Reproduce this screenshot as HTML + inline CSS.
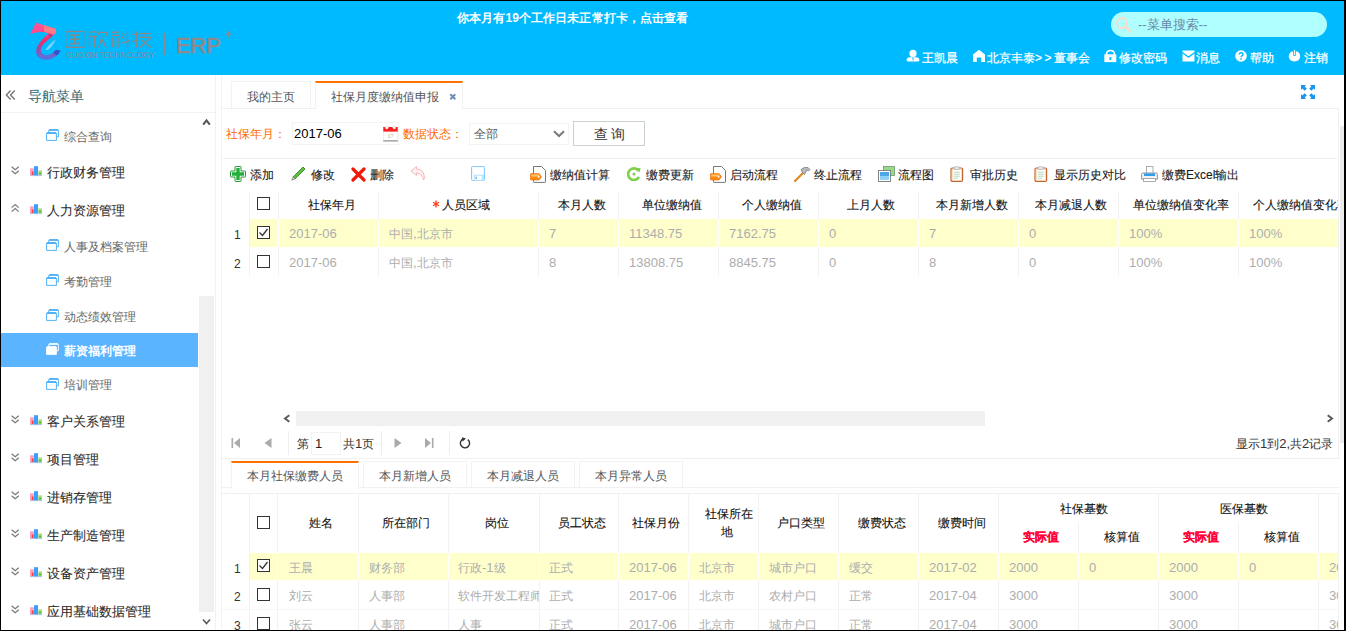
<!DOCTYPE html>
<html><head><meta charset="utf-8">
<style>
html,body{margin:0;padding:0}
body{width:1346px;height:631px;overflow:hidden;position:relative;background:#fff;font-family:"Liberation Sans",sans-serif;font-size:12px;color:#333}
.a{position:absolute}
.t{position:absolute;white-space:nowrap;line-height:16px;margin-left:1px}
.bd{position:absolute;background:#000}
#hdr{position:absolute;left:0;top:0;width:1346px;height:75px;background:#00baff}
.nav{color:#fff;font-size:12px;-webkit-text-stroke:0.25px #fff}
.sb1{font-size:13px;color:#2a2a2a;-webkit-text-stroke-width:0.08px}
.sb2{font-size:12px;color:#666}
.hl{background:#eee}
.vl{position:absolute;width:1px;background:#eee}
.hz{position:absolute;height:1px;background:#eee}
.th{font-size:12px;color:#111;-webkit-text-stroke-width:0.1px}
.td{font-size:12px;color:#adadad}
.num{font-size:13px}
.tb{font-size:12px;color:#1a1a1a;-webkit-text-stroke-width:0.1px}
.yel{position:absolute;background:#ffffcc}
.ck{position:absolute;width:11px;height:11px;border:1px solid #333;background:#fff}
.rn{font-size:12px;color:#333}
</style></head><body>

<div id="hdr"></div>
<!-- header notice -->
<div class="t" style="left:456px;top:10px;letter-spacing:0.1px;color:#fff;font-weight:bold;font-size:12px">你本月有19个工作日未正常打卡，点击查看</div>
<!-- search -->
<div class="a" style="left:1111px;top:12px;width:216px;height:25px;border-radius:13px;background:#b0ffff"></div>
<div class="t" style="left:1137px;top:17px;font-size:13px;color:#6a8aa8">--菜单搜索--</div>
<!-- nav links -->
<div class="t nav" style="left:921px;top:50px">王凯晨</div>
<div class="t nav" style="left:986px;top:50px">北京丰泰<span style="letter-spacing:2.5px">&gt;&gt;</span>董事会</div>
<div class="t nav" style="left:1118px;top:50px">修改密码</div>
<div class="t nav" style="left:1195px;top:50px">消息</div>
<div class="t nav" style="left:1249px;top:50px">帮助</div>
<div class="t nav" style="left:1303px;top:50px">注销</div>

<!-- sidebar -->

<div class="t" style="left:27px;top:87.5px;font-size:14px;color:#356a75">导航菜单</div>
<div class="hz" style="left:1px;top:112px;width:214px;background:#f3f3f3"></div>
<div class="vl" style="left:215px;top:75px;height:556px;background:#f2f2f2"></div>
<div class="vl" style="left:221px;top:75px;height:556px;background:#f3f3f3"></div>

<div class="t sb2" style="left:63px;top:129px">综合查询</div>
<div class="t sb1" style="left:46px;top:165.0px">行政财务管理</div>
<div class="t sb1" style="left:46px;top:203.0px">人力资源管理</div>
<div class="t sb2" style="left:63px;top:238.5px">人事及档案管理</div>
<div class="t sb2" style="left:63px;top:273.5px">考勤管理</div>
<div class="t sb2" style="left:63px;top:308.5px">动态绩效管理</div>
<div class="a" style="left:1px;top:333px;width:197px;height:34px;background:#5ab4ff"></div>
<div class="t sb2" style="left:63px;top:342.5px;color:#fff;font-weight:bold">薪资福利管理</div>
<div class="t sb2" style="left:63px;top:377px">培训管理</div>
<div class="t sb1" style="left:46px;top:414.0px">客户关系管理</div>
<div class="t sb1" style="left:46px;top:452.0px">项目管理</div>
<div class="t sb1" style="left:46px;top:490.0px">进销存管理</div>
<div class="t sb1" style="left:46px;top:528.0px">生产制造管理</div>
<div class="t sb1" style="left:46px;top:566.0px">设备资产管理</div>
<div class="t sb1" style="left:46px;top:604.0px">应用基础数据管理</div>
<div class="a" style="left:199px;top:296px;width:15px;height:316px;background:#f0f0f0"></div>

<!-- tabs -->
<div class="a" style="left:231px;top:81px;width:78px;height:27px;border:1px solid #f2f2f2;border-bottom:none"></div>
<div class="t" style="left:246px;top:88.5px;color:#555">我的主页</div>
<div class="a" style="left:315px;top:81px;width:146px;height:26px;border:1px solid #f2f2f2;border-top:2px solid #ff7200;border-bottom:none;background:#fff"></div>
<div class="t" style="left:330px;top:88.5px;color:#555">社保月度缴纳值申报</div>
<svg class="a" style="left:448.5px;top:92.5px" width="8" height="8" viewBox="0 0 8 8"><path d="M1.3 1.3 L6.3 6.3 M6.3 1.3 L1.3 6.3" stroke="#6f8db5" stroke-width="2"/></svg>

<!-- panel -->
<div class="a" style="left:221px;top:108px;width:94px;height:1px;background:#f0f0f0"></div>
<div class="a" style="left:462px;top:108px;width:877px;height:1px;background:#f0f0f0"></div>
<div class="a" style="left:221px;top:458px;width:1118px;height:1px;background:#f0f0f0"></div>
<div class="a" style="left:1338px;top:108px;width:1px;height:351px;background:#f0f0f0"></div>
<div class="a" style="left:1340px;top:126px;width:4px;height:317px;background:#eaeaea"></div>

<!-- form -->
<div class="t" style="left:225px;top:126px;color:#ff6a00">社保年月：</div>
<div class="a" style="left:292px;top:122px;width:105px;height:21px;border:1px solid #f3f3f3"></div>
<div class="t" style="left:293px;top:126px;color:#000;font-size:13px">2017-06</div>
<div class="t" style="left:402px;top:126px;color:#ff6a00">数据状态：</div>
<div class="a" style="left:469px;top:123px;width:98px;height:20px;border:1px solid #f3f3f3"></div>
<div class="t" style="left:473px;top:126px;color:#555">全部</div>
<div class="a" style="left:573px;top:121px;width:70px;height:23px;border:1px solid #c9d3c9"></div>
<div class="t" style="left:593px;top:126px;color:#333;font-size:14px;word-spacing:-0.5px">查 询</div>
<div class="hz" style="left:223px;top:158px;width:1114px"></div>

<!-- toolbar -->
<div class="t tb" style="left:249px;top:167px">添加</div>
<div class="t tb" style="left:310px;top:167px">修改</div>
<div class="t tb" style="left:369px;top:167px">删除</div>
<div class="t tb" style="left:549px;top:167px">缴纳值计算</div>
<div class="t tb" style="left:645px;top:167px">缴费更新</div>
<div class="t tb" style="left:729px;top:167px">启动流程</div>
<div class="t tb" style="left:813px;top:167px">终止流程</div>
<div class="t tb" style="left:897px;top:167px">流程图</div>
<div class="t tb" style="left:969px;top:167px">审批历史</div>
<div class="t tb" style="left:1053px;top:167px">显示历史对比</div>
<div class="t tb" style="left:1161px;top:167px">缴费Excel输出</div>


<!-- LOGO -->
<svg class="a" style="left:26px;top:20px" width="38" height="42" viewBox="0 0 38 42">
  <defs>
    <linearGradient id="lg2" x1="0" y1="0" x2="0" y2="42" gradientUnits="userSpaceOnUse"><stop offset="0" stop-color="#ff5aa0"/><stop offset="0.3" stop-color="#ff4a8c"/><stop offset="0.5" stop-color="#f42a6a"/><stop offset="0.72" stop-color="#9050b0"/><stop offset="0.9" stop-color="#5a72dc"/><stop offset="1" stop-color="#5a68d0"/></linearGradient>
  </defs>
  <path d="M4 14.3 L10 2.7 Q19 5.5 28.5 8.5 Q31 10 29.8 13 Q24 18 18.5 23 Q14.5 27 14.8 31 Q15.5 35 21 35.3 Q26 35 30 30 L34.5 30.5 Q31.5 37.5 23 39.5 Q14 40.5 11 35.5 Q8.5 30.5 12.5 24.5 Q16.5 18.5 22.5 13.3 Q14 10.5 4 14.3 Z" fill="url(#lg2)"/>
  <path d="M18 5 Q24 7 28.5 8.5 Q31 10 29.8 13 L27.5 15 Q25 13 22.5 13.3 L18 11.8 Z" fill="#ff7a82"/>
  <path d="M22.5 13.3 L27.5 15 Q25 17 23 18.5 Z" fill="#a03a80" opacity="0.7"/>
  <path d="M27 32.5 Q29.5 30 30 30 L34.5 30.5 Q33 34 30.5 35.5 Z" fill="#3a52c8"/>
  <path d="M19.5 30 Q22 25 29.5 19.5 Q28 25 22 30 Z" fill="#b0e0ff" opacity="0.7"/>
</svg>
<svg class="a" style="left:63px;top:28px" width="92" height="22" viewBox="0 0 92 22" fill="none" stroke="#8c8586" stroke-width="1.35" stroke-linecap="butt">
<rect x="2.7" y="3.5" width="18" height="15.8"/>
<path d="M6.3 7 H17.1 M6.3 11.2 H17.1 M6.3 15.9 H17.1 M11.7 7 V15.9 M15.6 13.6 L16.6 14.8"/>
<path d="M26.5 3.3 V19.6 M26.5 3.9 H33.8 M26.5 8.5 H33.8 M31.4 8.5 V19.6"/>
<path d="M35.3 6.8 L36.6 3.3 M36.4 4.4 H43.3 V7.8 M39.2 8.2 L35.6 19.6 M39 11.5 L43.3 19.6"/>
<g transform="translate(45 0)">
<path d="M3.3 4.4 L11.5 3.8 M3.3 7.3 H11.5 M7.5 3.8 V19.6 M4.2 9.4 V19.6 M11 9.4 V19.6"/>
<path d="M14.6 4.9 L16.4 7.5 M13.8 8.4 L16 11.5 M13.6 15.3 L21.6 12.6 M19.5 3.3 V19.6"/>
<path d="M28.3 3.3 V19.6 M24.4 6.5 H30.3 M24.4 13.3 L30.3 12.3"/>
<path d="M31.7 5.6 H43.6 M37.3 3.3 V9.4 M31.7 9.4 H42.8 L31.7 19.6 M33.5 11.9 L42.9 19.6"/>
</g>
</svg>
<div class="t" style="left:65px;top:50px;font-size:8.5px;line-height:10px;color:#8d8a8c;letter-spacing:0px;transform:scaleX(0.93);transform-origin:left">GUOXIN TECHNOLOGY</div>
<div class="a" style="left:163px;top:33px;width:2px;height:22px;background:#8d8a8c"></div>
<div class="t" style="left:175px;top:34.5px;font-size:22px;line-height:22px;color:#8d8a8c;-webkit-text-stroke:0.7px #8d8a8c;letter-spacing:-0.2px">ERP</div>
<svg class="a" style="left:225px;top:31px" width="8" height="7" viewBox="0 0 8 7"><path d="M0.3 3.2 H7.3 M3.8 0 V6.6" stroke="#8d8a8c" stroke-width="1.3"/></svg>

<!-- search icon -->
<svg class="a" style="left:1115px;top:16px" width="18" height="18" viewBox="0 0 18 18"><circle cx="7" cy="7" r="5" fill="none" stroke="#ffd8c8" stroke-width="1.8"/><path d="M10.5 10.5 L15.5 15.5" stroke="#ffd8c8" stroke-width="2.2" stroke-linecap="round"/></svg>

<!-- header nav icons -->
<svg class="a" style="left:906px;top:49px" width="14" height="14" viewBox="0 0 14 14"><circle cx="7" cy="4.4" r="3.6" fill="#fff"/><path d="M0.6 11 Q0.6 8.4 4 8.2 L10 8.2 Q13.4 8.4 13.4 11 Q13.4 12.6 11.6 12.6 L2.4 12.6 Q0.6 12.6 0.6 11 Z" fill="#fff"/><path d="M6.4 8.6 L7.6 8.6 L7.4 11.3 L7 11.8 L6.6 11.3 Z" fill="#00baff"/></svg>
<svg class="a" style="left:972px;top:49px" width="14" height="14" viewBox="0 0 14 14"><path d="M7 0.8 L13 5.6 L13 13 L9.2 13 L9.2 8.6 L4.8 8.6 L4.8 13 L1 13 L1 5.6 Z" fill="#fff"/></svg>
<svg class="a" style="left:1104px;top:49px" width="13" height="14" viewBox="0 0 13 14"><path d="M2.4 6 Q2.4 1.4 6.5 1.4 Q10.6 1.4 10.6 6" fill="none" stroke="#fff" stroke-width="1.5"/><rect x="0.3" y="5.3" width="12" height="7.8" fill="#fff"/><rect x="5.5" y="8" width="1.8" height="3" fill="#00baff"/></svg>
<svg class="a" style="left:1182px;top:50px" width="13" height="12" viewBox="0 0 13 12"><path d="M0.5 0.5 L12.5 0.5 L12.5 2 L6.5 6.3 L0.5 2 Z" fill="#fff"/><path d="M0.5 3.6 L6.5 7.9 L12.5 3.6 L12.5 11.5 L0.5 11.5 Z" fill="#fff"/></svg>
<svg class="a" style="left:1235px;top:50px" width="12" height="12" viewBox="0 0 12 12"><circle cx="6" cy="6" r="5.8" fill="#fff"/><path d="M4.2 4.6 Q4.2 2.7 6 2.7 Q7.9 2.7 7.9 4.4 Q7.9 5.4 6.9 5.9 Q6.1 6.3 6.1 7.2" fill="none" stroke="#00baff" stroke-width="1.4"/><rect x="5.3" y="8.2" width="1.5" height="1.5" fill="#00baff"/></svg>
<svg class="a" style="left:1288px;top:49px" width="13" height="13" viewBox="0 0 13 13"><path d="M4 2.6 Q0.8 4.1 0.8 7.3 Q0.8 12.4 6.5 12.4 Q12.2 12.4 12.2 7.3 Q12.2 4.1 9 2.6" fill="#fff"/><rect x="5.6" y="0.3" width="1.8" height="6.2" fill="#fff" stroke="#00baff" stroke-width="0.8"/></svg>

<!-- sidebar icons -->
<svg class="a" style="left:5px;top:89px" width="12" height="12" viewBox="0 0 12 12"><path d="M5.6 1.6 L1.4 6 L5.6 10.4 M9.8 1.6 L5.6 6 L9.8 10.4" fill="none" stroke="#7a7a7a" stroke-width="1.5"/></svg>
<svg class="a" style="left:202px;top:118px" width="9" height="8" viewBox="0 0 9 8"><path d="M1.2 6.6 L4.5 2.4 L7.8 6.6" fill="none" stroke="#555" stroke-width="2.1"/></svg>
<svg class="a" style="left:202px;top:618px" width="9" height="7" viewBox="0 0 9 7"><path d="M1 1.5 L4.5 5.5 L8 1.5" fill="none" stroke="#555" stroke-width="1.5"/></svg>

<svg class="a" style="left:46px;top:128.5px" width="13" height="12" viewBox="0 0 13 12"><path d="M2.7 3.5 L2.7 1.8 Q2.7 0.6 3.9 0.6 L11.3 0.6 Q12.4 0.6 12.4 1.8 L12.4 7.8 L10.5 7.8" fill="none" stroke="#3fa9f5" stroke-width="0.9"/><path d="M0.6 4.8 Q0.6 3.6 1.8 3.6 L9.2 3.6 Q10.4 3.6 10.4 4.8 L10.4 11.4 L0.6 11.4 Z" fill="none" stroke="#3fa9f5" stroke-width="0.9"/><rect x="0.6" y="3.6" width="9.8" height="1.3" fill="#3fa9f5"/><rect x="3" y="0.6" width="9.2" height="1.2" fill="#3fa9f5"/></svg>
<svg class="a" style="left:46px;top:238.5px" width="13" height="12" viewBox="0 0 13 12"><path d="M2.7 3.5 L2.7 1.8 Q2.7 0.6 3.9 0.6 L11.3 0.6 Q12.4 0.6 12.4 1.8 L12.4 7.8 L10.5 7.8" fill="none" stroke="#3fa9f5" stroke-width="0.9"/><path d="M0.6 4.8 Q0.6 3.6 1.8 3.6 L9.2 3.6 Q10.4 3.6 10.4 4.8 L10.4 11.4 L0.6 11.4 Z" fill="none" stroke="#3fa9f5" stroke-width="0.9"/><rect x="0.6" y="3.6" width="9.8" height="1.3" fill="#3fa9f5"/><rect x="3" y="0.6" width="9.2" height="1.2" fill="#3fa9f5"/></svg>
<svg class="a" style="left:46px;top:273.5px" width="13" height="12" viewBox="0 0 13 12"><path d="M2.7 3.5 L2.7 1.8 Q2.7 0.6 3.9 0.6 L11.3 0.6 Q12.4 0.6 12.4 1.8 L12.4 7.8 L10.5 7.8" fill="none" stroke="#3fa9f5" stroke-width="0.9"/><path d="M0.6 4.8 Q0.6 3.6 1.8 3.6 L9.2 3.6 Q10.4 3.6 10.4 4.8 L10.4 11.4 L0.6 11.4 Z" fill="none" stroke="#3fa9f5" stroke-width="0.9"/><rect x="0.6" y="3.6" width="9.8" height="1.3" fill="#3fa9f5"/><rect x="3" y="0.6" width="9.2" height="1.2" fill="#3fa9f5"/></svg>
<svg class="a" style="left:46px;top:308.5px" width="13" height="12" viewBox="0 0 13 12"><path d="M2.7 3.5 L2.7 1.8 Q2.7 0.6 3.9 0.6 L11.3 0.6 Q12.4 0.6 12.4 1.8 L12.4 7.8 L10.5 7.8" fill="none" stroke="#3fa9f5" stroke-width="0.9"/><path d="M0.6 4.8 Q0.6 3.6 1.8 3.6 L9.2 3.6 Q10.4 3.6 10.4 4.8 L10.4 11.4 L0.6 11.4 Z" fill="none" stroke="#3fa9f5" stroke-width="0.9"/><rect x="0.6" y="3.6" width="9.8" height="1.3" fill="#3fa9f5"/><rect x="3" y="0.6" width="9.2" height="1.2" fill="#3fa9f5"/></svg>
<svg class="a" style="left:46px;top:343px" width="13" height="12" viewBox="0 0 13 12"><path d="M2.7 3.5 L2.7 1.8 Q2.7 0.6 3.9 0.6 L11.3 0.6 Q12.4 0.6 12.4 1.8 L12.4 7.8 L10.5 7.8" fill="none" stroke="#fff" stroke-width="0.9"/><path d="M0.6 4.8 Q0.6 3.6 1.8 3.6 L9.2 3.6 Q10.4 3.6 10.4 4.8 L10.4 11.4 L0.6 11.4 Z" fill="#fff" stroke="#fff" stroke-width="0.9"/><rect x="0.6" y="3.6" width="9.8" height="1.3" fill="#fff"/><rect x="3" y="0.6" width="9.2" height="1.2" fill="#fff"/></svg>
<svg class="a" style="left:46px;top:377.5px" width="13" height="12" viewBox="0 0 13 12"><path d="M2.7 3.5 L2.7 1.8 Q2.7 0.6 3.9 0.6 L11.3 0.6 Q12.4 0.6 12.4 1.8 L12.4 7.8 L10.5 7.8" fill="none" stroke="#3fa9f5" stroke-width="0.9"/><path d="M0.6 4.8 Q0.6 3.6 1.8 3.6 L9.2 3.6 Q10.4 3.6 10.4 4.8 L10.4 11.4 L0.6 11.4 Z" fill="none" stroke="#3fa9f5" stroke-width="0.9"/><rect x="0.6" y="3.6" width="9.8" height="1.3" fill="#3fa9f5"/><rect x="3" y="0.6" width="9.2" height="1.2" fill="#3fa9f5"/></svg>
<svg class="a" style="left:30px;top:165.7px" width="13" height="11" viewBox="0 0 13 11"><rect x="0" y="2.3" width="3.8" height="7.2" fill="#ffa0b4"/><rect x="1.8" y="5.5" width="1.8" height="3.5" fill="#ff4040"/><rect x="4" y="0.2" width="4" height="9.5" fill="#3aa0ff"/><rect x="8.3" y="4.3" width="3.7" height="5.2" fill="#b0e080"/><rect x="8.8" y="6.5" width="2.5" height="2" fill="#50c040"/><rect x="0" y="9.3" width="12" height="0.8" fill="#9ab8e8"/></svg>
<svg class="a" style="left:10.8px;top:165.8px" width="9" height="9" viewBox="0 0 9 9"><path d="M0.6 0.8 L4.2 3.8 L7.8 0.8 M0.6 4.8 L4.2 7.8 L7.8 4.8" fill="none" stroke="#777" stroke-width="1.2"/></svg>
<svg class="a" style="left:30px;top:203.7px" width="13" height="11" viewBox="0 0 13 11"><rect x="0" y="2.3" width="3.8" height="7.2" fill="#ffa0b4"/><rect x="1.8" y="5.5" width="1.8" height="3.5" fill="#ff4040"/><rect x="4" y="0.2" width="4" height="9.5" fill="#3aa0ff"/><rect x="8.3" y="4.3" width="3.7" height="5.2" fill="#b0e080"/><rect x="8.8" y="6.5" width="2.5" height="2" fill="#50c040"/><rect x="0" y="9.3" width="12" height="0.8" fill="#9ab8e8"/></svg>
<svg class="a" style="left:10.8px;top:203.8px" width="9" height="9" viewBox="0 0 9 9"><path d="M0.6 3.6 L4.2 0.6 L7.8 3.6 M0.6 7.6 L4.2 4.6 L7.8 7.6" fill="none" stroke="#777" stroke-width="1.2"/></svg>
<svg class="a" style="left:30px;top:414.7px" width="13" height="11" viewBox="0 0 13 11"><rect x="0" y="2.3" width="3.8" height="7.2" fill="#ffa0b4"/><rect x="1.8" y="5.5" width="1.8" height="3.5" fill="#ff4040"/><rect x="4" y="0.2" width="4" height="9.5" fill="#3aa0ff"/><rect x="8.3" y="4.3" width="3.7" height="5.2" fill="#b0e080"/><rect x="8.8" y="6.5" width="2.5" height="2" fill="#50c040"/><rect x="0" y="9.3" width="12" height="0.8" fill="#9ab8e8"/></svg>
<svg class="a" style="left:10.8px;top:414.8px" width="9" height="9" viewBox="0 0 9 9"><path d="M0.6 0.8 L4.2 3.8 L7.8 0.8 M0.6 4.8 L4.2 7.8 L7.8 4.8" fill="none" stroke="#777" stroke-width="1.2"/></svg>
<svg class="a" style="left:30px;top:452.7px" width="13" height="11" viewBox="0 0 13 11"><rect x="0" y="2.3" width="3.8" height="7.2" fill="#ffa0b4"/><rect x="1.8" y="5.5" width="1.8" height="3.5" fill="#ff4040"/><rect x="4" y="0.2" width="4" height="9.5" fill="#3aa0ff"/><rect x="8.3" y="4.3" width="3.7" height="5.2" fill="#b0e080"/><rect x="8.8" y="6.5" width="2.5" height="2" fill="#50c040"/><rect x="0" y="9.3" width="12" height="0.8" fill="#9ab8e8"/></svg>
<svg class="a" style="left:10.8px;top:452.8px" width="9" height="9" viewBox="0 0 9 9"><path d="M0.6 0.8 L4.2 3.8 L7.8 0.8 M0.6 4.8 L4.2 7.8 L7.8 4.8" fill="none" stroke="#777" stroke-width="1.2"/></svg>
<svg class="a" style="left:30px;top:490.7px" width="13" height="11" viewBox="0 0 13 11"><rect x="0" y="2.3" width="3.8" height="7.2" fill="#ffa0b4"/><rect x="1.8" y="5.5" width="1.8" height="3.5" fill="#ff4040"/><rect x="4" y="0.2" width="4" height="9.5" fill="#3aa0ff"/><rect x="8.3" y="4.3" width="3.7" height="5.2" fill="#b0e080"/><rect x="8.8" y="6.5" width="2.5" height="2" fill="#50c040"/><rect x="0" y="9.3" width="12" height="0.8" fill="#9ab8e8"/></svg>
<svg class="a" style="left:10.8px;top:490.8px" width="9" height="9" viewBox="0 0 9 9"><path d="M0.6 0.8 L4.2 3.8 L7.8 0.8 M0.6 4.8 L4.2 7.8 L7.8 4.8" fill="none" stroke="#777" stroke-width="1.2"/></svg>
<svg class="a" style="left:30px;top:528.7px" width="13" height="11" viewBox="0 0 13 11"><rect x="0" y="2.3" width="3.8" height="7.2" fill="#ffa0b4"/><rect x="1.8" y="5.5" width="1.8" height="3.5" fill="#ff4040"/><rect x="4" y="0.2" width="4" height="9.5" fill="#3aa0ff"/><rect x="8.3" y="4.3" width="3.7" height="5.2" fill="#b0e080"/><rect x="8.8" y="6.5" width="2.5" height="2" fill="#50c040"/><rect x="0" y="9.3" width="12" height="0.8" fill="#9ab8e8"/></svg>
<svg class="a" style="left:10.8px;top:528.8px" width="9" height="9" viewBox="0 0 9 9"><path d="M0.6 0.8 L4.2 3.8 L7.8 0.8 M0.6 4.8 L4.2 7.8 L7.8 4.8" fill="none" stroke="#777" stroke-width="1.2"/></svg>
<svg class="a" style="left:30px;top:566.7px" width="13" height="11" viewBox="0 0 13 11"><rect x="0" y="2.3" width="3.8" height="7.2" fill="#ffa0b4"/><rect x="1.8" y="5.5" width="1.8" height="3.5" fill="#ff4040"/><rect x="4" y="0.2" width="4" height="9.5" fill="#3aa0ff"/><rect x="8.3" y="4.3" width="3.7" height="5.2" fill="#b0e080"/><rect x="8.8" y="6.5" width="2.5" height="2" fill="#50c040"/><rect x="0" y="9.3" width="12" height="0.8" fill="#9ab8e8"/></svg>
<svg class="a" style="left:10.8px;top:566.8px" width="9" height="9" viewBox="0 0 9 9"><path d="M0.6 0.8 L4.2 3.8 L7.8 0.8 M0.6 4.8 L4.2 7.8 L7.8 4.8" fill="none" stroke="#777" stroke-width="1.2"/></svg>
<svg class="a" style="left:30px;top:604.7px" width="13" height="11" viewBox="0 0 13 11"><rect x="0" y="2.3" width="3.8" height="7.2" fill="#ffa0b4"/><rect x="1.8" y="5.5" width="1.8" height="3.5" fill="#ff4040"/><rect x="4" y="0.2" width="4" height="9.5" fill="#3aa0ff"/><rect x="8.3" y="4.3" width="3.7" height="5.2" fill="#b0e080"/><rect x="8.8" y="6.5" width="2.5" height="2" fill="#50c040"/><rect x="0" y="9.3" width="12" height="0.8" fill="#9ab8e8"/></svg>
<svg class="a" style="left:10.8px;top:604.8px" width="9" height="9" viewBox="0 0 9 9"><path d="M0.6 0.8 L4.2 3.8 L7.8 0.8 M0.6 4.8 L4.2 7.8 L7.8 4.8" fill="none" stroke="#777" stroke-width="1.2"/></svg>
<!-- fullscreen icon -->
<svg class="a" style="left:1301px;top:85px" width="14" height="14" viewBox="0 0 14 14" fill="#1894ee">
<path d="M0 0 L5 0 L3.6 1.4 L5.8 3.6 L3.6 5.8 L1.4 3.6 L0 5 Z"/>
<path d="M14 0 L14 5 L12.6 3.6 L10.4 5.8 L8.2 3.6 L10.4 1.4 L9 0 Z"/>
<path d="M0 14 L0 9 L1.4 10.4 L3.6 8.2 L5.8 10.4 L3.6 12.6 L5 14 Z"/>
<path d="M14 14 L9 14 L10.4 12.6 L8.2 10.4 L10.4 8.2 L12.6 10.4 L14 9 Z"/>
</svg>
<!-- calendar -->
<svg class="a" style="left:383px;top:125px" width="15" height="17" viewBox="0 0 15 17">
<rect x="0.5" y="2" width="14" height="14" fill="#fff" stroke="#e6e6e6" stroke-width="0.6"/>
<rect x="0.3" y="15" width="14.4" height="1.6" fill="#aaa"/>
<rect x="0.3" y="2" width="14.4" height="4.6" fill="#ff1a1a"/>
<circle cx="3.8" cy="2.6" r="1.5" fill="#fff" stroke="#ccc" stroke-width="0.5"/><circle cx="11.2" cy="2.6" r="1.5" fill="#fff" stroke="#ccc" stroke-width="0.5"/>
<text x="7.5" y="13.2" font-size="6" text-anchor="middle" fill="#9aaa9a" font-family="Liberation Serif">17</text>
</svg>
<!-- select chevron -->
<svg class="a" style="left:553px;top:130px" width="12" height="8" viewBox="0 0 12 8"><path d="M1 1.2 L6 6 L11 1.2" fill="none" stroke="#7a7a7a" stroke-width="2"/></svg>

<!-- toolbar icons -->
<svg class="a" style="left:230px;top:166px" width="16" height="16" viewBox="0 0 16 16">
<path d="M5.5 0.5 L10.5 0.5 Q11 0.5 11 1 L11 5 L15 5 Q15.5 5 15.5 5.5 L15.5 10.5 Q15.5 11 15 11 L11 11 L11 15 Q11 15.5 10.5 15.5 L5.5 15.5 Q5 15.5 5 15 L5 11 L1 11 Q0.5 11 0.5 10.5 L0.5 5.5 Q0.5 5 1 5 L5 5 L5 1 Q5 0.5 5.5 0.5 Z" fill="#fff" stroke="#2a9a3a" stroke-width="1"/>
<path d="M6.3 2 L9.7 2 L9.7 6.3 L14 6.3 L14 9.7 L9.7 9.7 L9.7 14 L6.3 14 L6.3 9.7 L2 9.7 L2 6.3 L6.3 6.3 Z" fill="#22b03a"/>
</svg>
<svg class="a" style="left:291px;top:166px" width="15" height="15" viewBox="0 0 15 15">
<path d="M12 1 L14 3 L4.2 12.8 L2.2 10.8 Z" fill="#5cc040" stroke="#2f7a20" stroke-width="0.8"/>
<path d="M2.2 10.8 L4.2 12.8 L0.8 14.2 Z" fill="#e8d8b0" stroke="#444" stroke-width="0.5"/>
</svg>
<svg class="a" style="left:351px;top:167px" width="15" height="15" viewBox="0 0 15 15">
<path d="M2 2 L13 13 M13 2 L2 13" stroke="#f01a0a" stroke-width="3.2" stroke-linecap="round"/>
</svg>
<svg class="a" style="left:410px;top:165px" width="16" height="16" viewBox="0 0 16 16">
<path d="M1 6 L6.5 1.5 L6.5 4 Q14 4 14.5 13 L13.5 15 Q12.5 8.5 6.5 8 L6.5 10.5 Z" fill="#fff0f0" stroke="#f5b8bc" stroke-width="1"/>
</svg>
<svg class="a" style="left:471px;top:166px" width="14" height="15" viewBox="0 0 14 15">
<rect x="0.5" y="0.5" width="13" height="14" rx="0.8" fill="#eef8ff" stroke="#8cc8fa" stroke-width="1"/>
<rect x="2.2" y="1" width="9.6" height="6.5" fill="#fff"/>
<rect x="3.5" y="9.5" width="7.5" height="5" fill="#fff" stroke="#a8d8fa" stroke-width="0.6"/>
<rect x="4.6" y="10.6" width="1.2" height="2.6" fill="#5aaaf0"/>
<rect x="11" y="9" width="2" height="5.5" fill="#a8f0f8"/>
</svg>

<svg class="a" style="left:530px;top:166px" width="17" height="17" viewBox="0 0 17 17">
<path d="M3.5 0.5 L11.5 0.5 L15.5 4.5 L15.5 15.8 Q15.5 16.4 14.9 16.4 L4.1 16.4 Q3.5 16.4 3.5 15.8 Z" fill="#fff" stroke="#666" stroke-width="0.9"/>
<path d="M1.2 7.6 L9 7.6 L11.6 10.8 L9 14 L1.2 14 Q0.4 14 0.4 13.2 L0.4 8.4 Q0.4 7.6 1.2 7.6 Z" fill="#ff8a10" stroke="#e86a00" stroke-width="0.6"/>
<path d="M1.4 8.4 L8.6 8.4 L10.4 10.6 L1.4 10.6 Z" fill="#ffc070"/>
<circle cx="8.6" cy="10.8" r="0.9" fill="#fff"/>
</svg>
<svg class="a" style="left:710px;top:166px" width="17" height="17" viewBox="0 0 17 17">
<path d="M3.5 0.5 L11.5 0.5 L15.5 4.5 L15.5 15.8 Q15.5 16.4 14.9 16.4 L4.1 16.4 Q3.5 16.4 3.5 15.8 Z" fill="#fff" stroke="#666" stroke-width="0.9"/>
<path d="M1.2 7.6 L9 7.6 L11.6 10.8 L9 14 L1.2 14 Q0.4 14 0.4 13.2 L0.4 8.4 Q0.4 7.6 1.2 7.6 Z" fill="#ff8a10" stroke="#e86a00" stroke-width="0.6"/>
<path d="M1.4 8.4 L8.6 8.4 L10.4 10.6 L1.4 10.6 Z" fill="#ffc070"/>
<circle cx="8.6" cy="10.8" r="0.9" fill="#fff"/>
</svg>
<svg class="a" style="left:627px;top:167px" width="14" height="14" viewBox="0 0 14 14">
<path d="M11.8 4 A5.8 5.8 0 1 0 12 10" fill="none" stroke="#7ed04a" stroke-width="2.6"/>
<path d="M9 1.2 L13.6 1 L12.6 5.6 Z" fill="#7ed04a"/>
<circle cx="7" cy="7" r="1.5" fill="#7ed04a"/>
</svg>
<svg class="a" style="left:794px;top:166px" width="17" height="16" viewBox="0 0 17 16">
<path d="M1 15 L9.5 6.5" stroke="#e08a20" stroke-width="2.2" stroke-linecap="round"/>
<path d="M7 3.5 Q10 0.5 14 1.5 L16 3.5 L14.5 5 L13 4 L10.5 8.5 L8 6 Z" fill="#b8b8b8" stroke="#777" stroke-width="0.7"/>
</svg>
<svg class="a" style="left:878px;top:166px" width="17" height="16" viewBox="0 0 17 16">
<rect x="5.5" y="0.5" width="11" height="9" fill="#9ad88a" stroke="#6a9a6a" stroke-width="0.8"/>
<rect x="0.5" y="4.5" width="12" height="11" fill="#fff" stroke="#777" stroke-width="0.9"/>
<rect x="2" y="6" width="9" height="7.5" fill="#4aa8e8"/>
<rect x="2" y="10" width="9" height="3.5" fill="#8fd0f8"/>
</svg>
<svg class="a" style="left:950px;top:166px" width="14" height="16" viewBox="0 0 14 16">
<rect x="1" y="2" width="11.6" height="13.4" rx="1.3" fill="#fff" stroke="#c4662c" stroke-width="1.2"/>
<rect x="2.2" y="3.4" width="9.2" height="10.8" fill="#fff" stroke="#f0c090" stroke-width="0.5"/>
<path d="M3.8 6.2 H9.8 M3.8 8.2 H9.8 M3.8 10.2 H9.8 M3.8 12.2 H8" stroke="#a8cca8" stroke-width="0.8"/>
<rect x="4.2" y="0.8" width="5.2" height="2.6" rx="0.8" fill="#eee" stroke="#999" stroke-width="0.6"/>
</svg>
<svg class="a" style="left:1034px;top:166px" width="14" height="16" viewBox="0 0 14 16">
<rect x="1" y="2" width="11.6" height="13.4" rx="1.3" fill="#fff" stroke="#c4662c" stroke-width="1.2"/>
<rect x="2.2" y="3.4" width="9.2" height="10.8" fill="#fff" stroke="#f0c090" stroke-width="0.5"/>
<path d="M3.8 6.2 H9.8 M3.8 8.2 H9.8 M3.8 10.2 H9.8 M3.8 12.2 H8" stroke="#a8cca8" stroke-width="0.8"/>
<rect x="4.2" y="0.8" width="5.2" height="2.6" rx="0.8" fill="#eee" stroke="#999" stroke-width="0.6"/>
</svg>
<svg class="a" style="left:1141px;top:166px" width="17" height="16" viewBox="0 0 17 16">
<rect x="5.5" y="0.6" width="6.5" height="8" fill="#fff" stroke="#999" stroke-width="0.8"/>
<path d="M0.6 8.5 Q0.6 7 2 7 L15 7 Q16.4 7 16.4 8.5 L16.4 13.2 L0.6 13.2 Z" fill="#f2f2f2" stroke="#8a8a8a" stroke-width="0.9"/>
<rect x="3" y="7.4" width="11" height="2.6" fill="#2f9cec"/>
<rect x="2.5" y="12.6" width="12" height="2.8" fill="#fff" stroke="#999" stroke-width="0.8"/>
</svg>
<svg class="a" style="left:283px;top:414px" width="8" height="9" viewBox="0 0 8 9"><path d="M6.3 1.2 L2 4.5 L6.3 7.8" fill="none" stroke="#5a5a5a" stroke-width="2"/></svg>
<div class="a" style="left:296px;top:411px;width:689px;height:15px;background:#f0f0f0"></div>
<svg class="a" style="left:1326px;top:414px" width="8" height="9" viewBox="0 0 8 9"><path d="M1.7 1.2 L6 4.5 L1.7 7.8" fill="none" stroke="#5a5a5a" stroke-width="2"/></svg>
<svg class="a" style="left:231px;top:438px" width="10" height="10" viewBox="0 0 10 10"><rect x="0.5" y="0" width="1.6" height="10" fill="#aaa"/><path d="M9 0 L9 10 L3 5 Z" fill="#aaa"/></svg>
<svg class="a" style="left:264px;top:438px" width="8" height="10" viewBox="0 0 8 10"><path d="M7.5 0 L7.5 10 L0.5 5 Z" fill="#aaa"/></svg>
<div class="a" style="left:288px;top:431px;width:1px;height:24px;background:#eee"></div>
<div class="t" style="left:296px;top:435.5px;color:#333">第</div>
<div class="a" style="left:311px;top:432px;width:28px;height:21px;border:1px solid #f2f2f2"></div>
<div class="t" style="left:314px;top:436px;color:#222;font-size:13px">1</div>
<div class="t" style="left:342px;top:435.5px;color:#333">共<span style="font-size:13px">1</span>页</div>
<div class="a" style="left:381px;top:431px;width:1px;height:24px;background:#eee"></div>
<svg class="a" style="left:394px;top:438px" width="8" height="10" viewBox="0 0 8 10"><path d="M0.5 0 L0.5 10 L7.5 5 Z" fill="#aaa"/></svg>
<svg class="a" style="left:424px;top:438px" width="10" height="10" viewBox="0 0 10 10"><path d="M1 0 L1 10 L7 5 Z" fill="#aaa"/><rect x="7.9" y="0" width="1.6" height="10" fill="#aaa"/></svg>
<div class="a" style="left:449px;top:431px;width:1px;height:24px;background:#eee"></div>
<svg class="a" style="left:459px;top:437px" width="12" height="12" viewBox="0 0 12 12"><path d="M8.8 2.6 A4.6 4.6 0 1 1 4.2 2" fill="none" stroke="#333" stroke-width="1.4"/><path d="M3 0.3 L7 1.6 L3.6 4.4 Z" fill="#333"/></svg>
<div class="t" style="left:1235px;top:435.5px;color:#333">显示<span style="font-size:13px">1</span>到<span style="font-size:13px">2,</span>共<span style="font-size:13px">2</span>记录</div>
<div class="a" style="left:231px;top:461px;width:126px;height:26px;border:1px solid #f2f2f2;border-top:2px solid #ff7200;border-bottom:none"></div>
<div class="t" style="left:246px;top:467.5px;color:#555">本月社保缴费人员</div>
<div class="a" style="left:363px;top:461px;width:102px;height:26px;border:1px solid #f2f2f2;border-bottom:none"></div>
<div class="t" style="left:378px;top:467.5px;color:#555">本月新增人员</div>
<div class="a" style="left:471px;top:461px;width:102px;height:26px;border:1px solid #f2f2f2;border-bottom:none"></div>
<div class="t" style="left:486px;top:467.5px;color:#555">本月减退人员</div>
<div class="a" style="left:579px;top:461px;width:102px;height:26px;border:1px solid #f2f2f2;border-bottom:none"></div>
<div class="t" style="left:594px;top:467.5px;color:#555">本月异常人员</div>
<div class="a" style="left:221px;top:487px;width:10px;height:1px;background:#f0f0f0"></div>
<div class="a" style="left:359px;top:487px;width:980px;height:1px;background:#f0f0f0"></div>
<div class="a" style="left:249px;top:219px;width:1089px;height:28px;background:#ffffcc"></div>
<div class="a" style="left:249px;top:191px;width:1px;height:85px;background:#f2f2f2"></div>
<div class="a" style="left:278px;top:191px;width:1px;height:85px;background:#f2f2f2"></div>
<div class="a" style="left:378px;top:191px;width:1px;height:85px;background:#f2f2f2"></div>
<div class="a" style="left:538px;top:191px;width:1px;height:85px;background:#f2f2f2"></div>
<div class="a" style="left:618px;top:191px;width:1px;height:85px;background:#f2f2f2"></div>
<div class="a" style="left:718px;top:191px;width:1px;height:85px;background:#f2f2f2"></div>
<div class="a" style="left:818px;top:191px;width:1px;height:85px;background:#f2f2f2"></div>
<div class="a" style="left:918px;top:191px;width:1px;height:85px;background:#f2f2f2"></div>
<div class="a" style="left:1018px;top:191px;width:1px;height:85px;background:#f2f2f2"></div>
<div class="a" style="left:1118px;top:191px;width:1px;height:85px;background:#f2f2f2"></div>
<div class="a" style="left:1238px;top:191px;width:1px;height:85px;background:#f2f2f2"></div>
<div class="a" style="left:278px;top:219px;width:1px;height:28px;background:#ffffff"></div>
<div class="a" style="left:378px;top:219px;width:1px;height:28px;background:#ffffff"></div>
<div class="a" style="left:538px;top:219px;width:1px;height:28px;background:#ffffff"></div>
<div class="a" style="left:618px;top:219px;width:1px;height:28px;background:#ffffff"></div>
<div class="a" style="left:718px;top:219px;width:1px;height:28px;background:#ffffff"></div>
<div class="a" style="left:818px;top:219px;width:1px;height:28px;background:#ffffff"></div>
<div class="a" style="left:918px;top:219px;width:1px;height:28px;background:#ffffff"></div>
<div class="a" style="left:1018px;top:219px;width:1px;height:28px;background:#ffffff"></div>
<div class="a" style="left:1118px;top:219px;width:1px;height:28px;background:#ffffff"></div>
<div class="a" style="left:1238px;top:219px;width:1px;height:28px;background:#ffffff"></div>
<div class="a" style="left:222px;top:190px;width:1116px;height:90px;overflow:hidden">
<div class="t th" style="left:85px;top:7px">社保年月</div>
<div class="t th" style="left:219px;top:7px">人员区域</div>
<div class="t th" style="left:335px;top:7px">本月人数</div>
<div class="t th" style="left:419px;top:7px">单位缴纳值</div>
<div class="t th" style="left:519px;top:7px">个人缴纳值</div>
<div class="t th" style="left:624px;top:7px">上月人数</div>
<div class="t th" style="left:713px;top:7px">本月新增人数</div>
<div class="t th" style="left:812px;top:7px">本月减退人数</div>
<div class="t th" style="left:910px;top:7px">单位缴纳值变化率</div>
<div class="t th" style="left:1030px;top:7px">个人缴纳值变化率</div>
</div>
<svg class="a" style="left:432px;top:199.5px" width="8" height="8" viewBox="0 0 8 8"><path d="M4 0.6 V7.4 M1 2.3 L7 5.7 M7 2.3 L1 5.7" stroke="#ff3a10" stroke-width="1.3"/></svg>
<div class="ck" style="left:257px;top:197px"></div>
<div class="ck" style="left:257px;top:226px"></div>
<svg class="a" style="left:257px;top:226px" width="13" height="13"><path d="M2.5 6.5 L5.5 9.5 L10.5 3" fill="none" stroke="#333" stroke-width="1.3"/></svg>
<div class="ck" style="left:257px;top:255px"></div>
<div class="t rn" style="left:233px;top:227.0px;">1</div>
<div class="t rn" style="left:233px;top:256.0px;">2</div>
<div class="t td" style="left:288px;top:226.0px;"><span class="num">2017-06</span></div>
<div class="t td" style="left:388px;top:226.0px;">中国<span class="num">,</span>北京市</div>
<div class="t td" style="left:548px;top:226.0px;"><span class="num">7</span></div>
<div class="t td" style="left:628px;top:226.0px;"><span class="num">11348.75</span></div>
<div class="t td" style="left:728px;top:226.0px;"><span class="num">7162.75</span></div>
<div class="t td" style="left:828px;top:226.0px;"><span class="num">0</span></div>
<div class="t td" style="left:928px;top:226.0px;"><span class="num">7</span></div>
<div class="t td" style="left:1028px;top:226.0px;"><span class="num">0</span></div>
<div class="t td" style="left:1128px;top:226.0px;"><span class="num">100%</span></div>
<div class="t td" style="left:1248px;top:226.0px;"><span class="num">100%</span></div>
<div class="t td" style="left:288px;top:255.0px;"><span class="num">2017-06</span></div>
<div class="t td" style="left:388px;top:255.0px;">中国<span class="num">,</span>北京市</div>
<div class="t td" style="left:548px;top:255.0px;"><span class="num">8</span></div>
<div class="t td" style="left:628px;top:255.0px;"><span class="num">13808.75</span></div>
<div class="t td" style="left:728px;top:255.0px;"><span class="num">8845.75</span></div>
<div class="t td" style="left:828px;top:255.0px;"><span class="num">0</span></div>
<div class="t td" style="left:928px;top:255.0px;"><span class="num">8</span></div>
<div class="t td" style="left:1028px;top:255.0px;"><span class="num">0</span></div>
<div class="t td" style="left:1128px;top:255.0px;"><span class="num">100%</span></div>
<div class="t td" style="left:1248px;top:255.0px;"><span class="num">100%</span></div>
<div class="a" style="left:249px;top:553px;width:1089px;height:27px;background:#ffffcc"></div>
<div class="a" style="left:249px;top:493px;width:1px;height:137px;background:#f2f2f2"></div>
<div class="a" style="left:277px;top:493px;width:1px;height:137px;background:#f2f2f2"></div>
<div class="a" style="left:358px;top:493px;width:1px;height:137px;background:#f2f2f2"></div>
<div class="a" style="left:448px;top:493px;width:1px;height:137px;background:#f2f2f2"></div>
<div class="a" style="left:539px;top:493px;width:1px;height:137px;background:#f2f2f2"></div>
<div class="a" style="left:618px;top:493px;width:1px;height:137px;background:#f2f2f2"></div>
<div class="a" style="left:688px;top:493px;width:1px;height:137px;background:#f2f2f2"></div>
<div class="a" style="left:758px;top:493px;width:1px;height:137px;background:#f2f2f2"></div>
<div class="a" style="left:838px;top:493px;width:1px;height:137px;background:#f2f2f2"></div>
<div class="a" style="left:918px;top:493px;width:1px;height:137px;background:#f2f2f2"></div>
<div class="a" style="left:998px;top:493px;width:1px;height:137px;background:#f2f2f2"></div>
<div class="a" style="left:1158px;top:493px;width:1px;height:137px;background:#f2f2f2"></div>
<div class="a" style="left:1318px;top:493px;width:1px;height:137px;background:#f2f2f2"></div>
<div class="a" style="left:277px;top:553px;width:1px;height:27px;background:#ffffff"></div>
<div class="a" style="left:358px;top:553px;width:1px;height:27px;background:#ffffff"></div>
<div class="a" style="left:448px;top:553px;width:1px;height:27px;background:#ffffff"></div>
<div class="a" style="left:539px;top:553px;width:1px;height:27px;background:#ffffff"></div>
<div class="a" style="left:618px;top:553px;width:1px;height:27px;background:#ffffff"></div>
<div class="a" style="left:688px;top:553px;width:1px;height:27px;background:#ffffff"></div>
<div class="a" style="left:758px;top:553px;width:1px;height:27px;background:#ffffff"></div>
<div class="a" style="left:838px;top:553px;width:1px;height:27px;background:#ffffff"></div>
<div class="a" style="left:918px;top:553px;width:1px;height:27px;background:#ffffff"></div>
<div class="a" style="left:998px;top:553px;width:1px;height:27px;background:#ffffff"></div>
<div class="a" style="left:1158px;top:553px;width:1px;height:27px;background:#ffffff"></div>
<div class="a" style="left:1318px;top:553px;width:1px;height:27px;background:#ffffff"></div>
<div class="a" style="left:1078px;top:523px;width:1px;height:107px;background:#f2f2f2"></div>
<div class="a" style="left:1078px;top:553px;width:1px;height:27px;background:#ffffff"></div>
<div class="a" style="left:1238px;top:523px;width:1px;height:107px;background:#f2f2f2"></div>
<div class="a" style="left:1238px;top:553px;width:1px;height:27px;background:#ffffff"></div>
<div class="a" style="left:222px;top:493px;width:1116px;height:1px;background:#f0f0f0"></div>
<div class="a" style="left:222px;top:609px;width:1116px;height:1px;background:#f6f6f6"></div>
<div class="a" style="left:1338px;top:493px;width:1px;height:137px;background:#f2f2f2"></div>
<div class="t th" style="left:308px;top:514.5px;">姓名</div>
<div class="t th" style="left:381px;top:514.5px;">所在部门</div>
<div class="t th" style="left:484px;top:514.5px;">岗位</div>
<div class="t th" style="left:557px;top:514.5px;">员工状态</div>
<div class="t th" style="left:631px;top:514.5px;">社保月份</div>
<div class="t th" style="left:704px;top:506.0px;">社保所在</div>
<div class="t th" style="left:720px;top:523.5px;">地</div>
<div class="t th" style="left:776px;top:514.5px;">户口类型</div>
<div class="t th" style="left:857px;top:514.5px;">缴费状态</div>
<div class="t th" style="left:937px;top:514.5px;">缴费时间</div>
<div class="t th" style="left:1059px;top:500.5px;">社保基数</div>
<div class="t th" style="left:1219px;top:500.5px;">医保基数</div>
<div class="t th" style="left:1103px;top:528.5px;">核算值</div>
<div class="t th" style="left:1263px;top:528.5px;">核算值</div>
<div class="t th" style="left:1022px;top:529.0px;color:#ff0033;font-weight:bold">实际值</div>
<div class="t th" style="left:1182px;top:529.0px;color:#ff0033;font-weight:bold">实际值</div>
<div class="ck" style="left:257px;top:516px"></div>
<div class="ck" style="left:257px;top:559px"></div>
<svg class="a" style="left:257px;top:559px" width="13" height="13"><path d="M2.5 6.5 L5.5 9.5 L10.5 3" fill="none" stroke="#333" stroke-width="1.3"/></svg>
<div class="ck" style="left:257px;top:588px"></div>
<div class="ck" style="left:257px;top:617px"></div>
<div class="t rn" style="left:233px;top:560.5px;">1</div>
<div class="t rn" style="left:233px;top:589.0px;">2</div>
<div class="t rn" style="left:233px;top:618.0px;">3</div>
<div class="a" style="left:222px;top:553px;width:1116px;height:77px;overflow:hidden">
<div class="t td" style="left:66px;top:6.5px;width:69px;overflow:hidden">王晨</div>
<div class="t td" style="left:146px;top:6.5px;width:79px;overflow:hidden">财务部</div>
<div class="t td" style="left:235px;top:6.5px;width:81px;overflow:hidden">行政<span class="num">-1</span>级</div>
<div class="t td" style="left:326px;top:6.5px;width:69px;overflow:hidden">正式</div>
<div class="t td" style="left:406px;top:6.5px;width:59px;overflow:hidden"><span class="num">2017-06</span></div>
<div class="t td" style="left:476px;top:6.5px;width:59px;overflow:hidden">北京市</div>
<div class="t td" style="left:546px;top:6.5px;width:69px;overflow:hidden">城市户口</div>
<div class="t td" style="left:626px;top:6.5px;width:69px;overflow:hidden">缓交</div>
<div class="t td" style="left:706px;top:6.5px;width:69px;overflow:hidden"><span class="num">2017-02</span></div>
<div class="t td" style="left:786px;top:6.5px;width:149px;overflow:hidden"><span class="num">2000</span></div>
<div class="t td" style="left:866px;top:6.5px;width:229px;overflow:hidden"><span class="num">0</span></div>
<div class="t td" style="left:946px;top:6.5px;width:169px;overflow:hidden"><span class="num">2000</span></div>
<div class="t td" style="left:1026px;top:6.5px;width:89px;overflow:hidden"><span class="num">0</span></div>
<div class="t td" style="left:1106px;top:6.5px;width:9px;overflow:hidden"><span class="num">2000</span></div>
<div class="t td" style="left:66px;top:35.2px;width:69px;overflow:hidden">刘云</div>
<div class="t td" style="left:146px;top:35.2px;width:79px;overflow:hidden">人事部</div>
<div class="t td" style="left:235px;top:35.2px;width:81px;overflow:hidden">软件开发工程师</div>
<div class="t td" style="left:326px;top:35.2px;width:69px;overflow:hidden">正式</div>
<div class="t td" style="left:406px;top:35.2px;width:59px;overflow:hidden"><span class="num">2017-06</span></div>
<div class="t td" style="left:476px;top:35.2px;width:59px;overflow:hidden">北京市</div>
<div class="t td" style="left:546px;top:35.2px;width:69px;overflow:hidden">农村户口</div>
<div class="t td" style="left:626px;top:35.2px;width:69px;overflow:hidden">正常</div>
<div class="t td" style="left:706px;top:35.2px;width:69px;overflow:hidden"><span class="num">2017-04</span></div>
<div class="t td" style="left:786px;top:35.2px;width:149px;overflow:hidden"><span class="num">3000</span></div>
<div class="t td" style="left:946px;top:35.2px;width:169px;overflow:hidden"><span class="num">3000</span></div>
<div class="t td" style="left:1106px;top:35.2px;width:9px;overflow:hidden"><span class="num">3000</span></div>
<div class="t td" style="left:66px;top:63.9px;width:69px;overflow:hidden">张云</div>
<div class="t td" style="left:146px;top:63.9px;width:79px;overflow:hidden">人事部</div>
<div class="t td" style="left:235px;top:63.9px;width:81px;overflow:hidden">人事</div>
<div class="t td" style="left:326px;top:63.9px;width:69px;overflow:hidden">正式</div>
<div class="t td" style="left:406px;top:63.9px;width:59px;overflow:hidden"><span class="num">2017-06</span></div>
<div class="t td" style="left:476px;top:63.9px;width:59px;overflow:hidden">北京市</div>
<div class="t td" style="left:546px;top:63.9px;width:69px;overflow:hidden">城市户口</div>
<div class="t td" style="left:626px;top:63.9px;width:69px;overflow:hidden">正常</div>
<div class="t td" style="left:706px;top:63.9px;width:69px;overflow:hidden"><span class="num">2017-04</span></div>
<div class="t td" style="left:786px;top:63.9px;width:149px;overflow:hidden"><span class="num">3000</span></div>
<div class="t td" style="left:946px;top:63.9px;width:169px;overflow:hidden"><span class="num">3000</span></div>
<div class="t td" style="left:1106px;top:63.9px;width:9px;overflow:hidden"><span class="num">3000</span></div>
</div>

<!-- window border -->
<div class="bd" style="left:0;top:0;width:1346px;height:1px"></div>
<div class="bd" style="left:0;top:0;width:1px;height:631px"></div>
<div class="bd" style="left:1344px;top:0;width:2px;height:631px"></div>
<div class="bd" style="left:0;top:630px;width:1346px;height:1px"></div>
</body></html>
